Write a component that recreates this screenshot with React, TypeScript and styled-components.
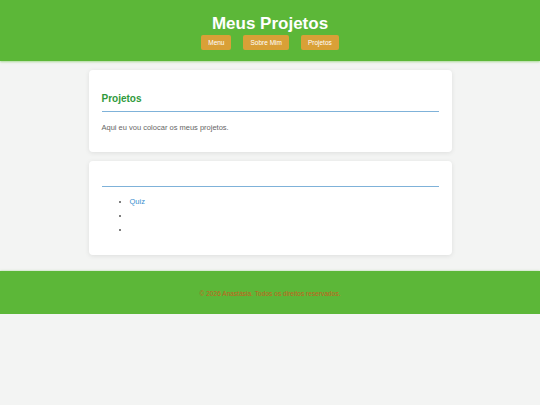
import React from 'react'
import styled, { createGlobalStyle } from 'styled-components';

const GlobalStyle = createGlobalStyle`
  html, body {
    margin: 0;
    padding: 0;
    background-color: #f3f4f3;
    font-family: "Liberation Sans", Arial, sans-serif;
  }
`;

const links = ['Menu', 'Sobre Mim', 'Projetos'];

const App = () => {
  return (
    <>
      <GlobalStyle />
      <Header>
        <Title>Meus Projetos</Title>
        <Nav>
          {links.map((label) => (
            <NavButton key={label} href="#">{label}</NavButton>
          ))}
        </Nav>
      </Header>
      <Main>
        <Card>
          <CardTitle>Projetos</CardTitle>
          <Text>Aqui eu vou colocar os meus projetos.</Text>
        </Card>
        <Card>
          <CardTitle />
          <ProjectList>
            <li><ProjectLink href="#">Quiz</ProjectLink></li>
            <li></li>
            <li></li>
          </ProjectList>
        </Card>
      </Main>
      <Footer>
        <FooterText>© 2026 Anastásia. Todos os direitos reservados.</FooterText>
      </Footer>
    </>
  )
}

const Header = styled.header`
  background-color: #5cb738;
  padding: 14px 0 11px;
  text-align: center;
  box-shadow: 0 1px 2px rgba(120, 200, 90, 0.6);
`;

const Title = styled.h1`
  margin: 0 0 1px;
  color: #ffffff;
  font-size: 17px;
  line-height: 20px;
  font-weight: bold;
`;

const Nav = styled.nav`
  display: flex;
  justify-content: center;
  gap: 12px;
`;

const NavButton = styled.a`
  display: block;
  background-color: #d9a037;
  color: #ffffff;
  font-size: 6.5px;
  line-height: 8px;
  padding: 3.5px 7px;
  border-radius: 2px;
  text-decoration: none;
`;

const Main = styled.main`
  width: 363px;
  margin: 0 auto;
  padding-top: 9px;
  display: flex;
  flex-direction: column;
  gap: 9px;
`;

const Card = styled.section`
  background-color: #ffffff;
  border-radius: 4px;
  padding: 13px;
  box-shadow: 0 1px 5px rgba(0, 0, 0, 0.09);
`;

const CardTitle = styled.h2`
  margin: 8px 0 0;
  padding-bottom: 4px;
  border-bottom: 1.5px solid #7fb2d9;
  color: #2f9a3c;
  font-size: 10px;
  line-height: 16px;
  font-weight: bold;
`;

const Text = styled.p`
  margin: 10.5px 0 7.5px;
  color: #666666;
  font-size: 7.5px;
  line-height: 9px;
`;

const ProjectList = styled.ul`
  margin: 8px 0 4px;
  padding-left: 28px;
  color: #555555;
  font-size: 7.5px;
  line-height: 14.2px;
`;

const ProjectLink = styled.a`
  color: #3a8fcf;
  text-decoration: none;
`;

const Footer = styled.footer`
  margin-top: 16px;
  height: 43px;
  background-color: #5cb738;
  display: flex;
  align-items: center;
  justify-content: center;
  box-shadow: 0 0 2px rgba(120, 200, 90, 0.6);
`;

const FooterText = styled.p`
  margin: 0 0 -1px;
  padding-top: 1px;
  color: #c4601e;
  font-size: 6.6px;
`;

export default App
